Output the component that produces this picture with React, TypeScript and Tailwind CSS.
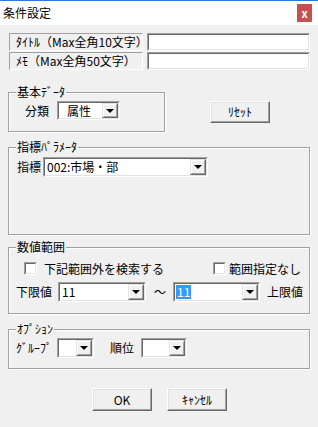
import React from "react";

const FONT = { fontFamily: '"Noto Sans CJK JP", "Noto Sans", sans-serif' };

function Sunken({ className = "", children }: { className?: string; children?: React.ReactNode }) {
  return (
    <div className={"border border-t-[#a0a0a0] border-l-[#a0a0a0] border-b-white border-r-white " + className}>
      <div className="w-full h-full border border-t-[#696969] border-l-[#696969] border-b-[#e3e3e3] border-r-[#e3e3e3] bg-white flex items-center">
        {children}
      </div>
    </div>
  );
}

function DropBtn() {
  return (
    <div className="w-[16px] h-full border border-t-[#e3e3e3] border-l-[#e3e3e3] border-b-[#696969] border-r-[#696969]">
      <div className="w-full h-full bg-[#f0f0f0] border border-t-white border-l-white border-b-[#a0a0a0] border-r-[#a0a0a0] flex items-center justify-center">
        <div className="w-0 h-0 border-l-[4px] border-r-[4px] border-t-[4px] border-l-transparent border-r-transparent border-t-black" />
      </div>
    </div>
  );
}

function Combo({ className = "", text, textClass = "pl-[2px]", selected = false }: { className?: string; text?: string; textClass?: string; selected?: boolean }) {
  return (
    <Sunken className={className}>
      <div className={"flex-1 h-full flex items-center text-[12px] leading-[14px] whitespace-nowrap overflow-hidden " + textClass}>
        {selected ? <span className="bg-[#3399ff] text-white px-[1px]">{text}</span> : text}
      </div>
      <DropBtn />
    </Sunken>
  );
}

function Group({ title, className = "", children }: { title: string; className?: string; children?: React.ReactNode }) {
  return (
    <div className={"relative border border-[#a0a0a0] shadow-[inset_1px_1px_0_#ffffff,1px_1px_0_#ffffff] " + className}>
      <span className="absolute left-[7px] top-[-8px] px-[1px] bg-[#f0f0f0] text-[12px] leading-[14px] whitespace-nowrap">{title}</span>
      {children}
    </div>
  );
}

function Button({ label, className = "" }: { label: string; className?: string }) {
  return (
    <div className={"border border-t-white border-l-white border-b-[#696969] border-r-[#696969] " + className}>
      <div className="w-full h-full border border-t-[#e3e3e3] border-l-[#e3e3e3] border-b-[#a0a0a0] border-r-[#a0a0a0] bg-[#f0f0f0] flex items-center justify-center text-[12px] leading-[14px]">
        {label}
      </div>
    </div>
  );
}

function Check({ className = "" }: { className?: string }) {
  return (
    <div className={"w-[13px] h-[13px] border border-t-[#a0a0a0] border-l-[#a0a0a0] border-b-white border-r-white " + className}>
      <div className="w-full h-full border border-t-[#696969] border-l-[#696969] border-b-[#e3e3e3] border-r-[#e3e3e3] bg-white" />
    </div>
  );
}

export default function App() {
  return (
    <div className="w-[318px] h-[427px] bg-[#f0f0f0] flex flex-col text-black overflow-hidden" style={FONT}>
      {/* Title bar */}
      <div className="h-[25px] bg-white border-t border-[#2b7bd4] flex items-start justify-between shrink-0">
        <span className="pl-[3px] pt-[5px] text-[12px] leading-[14px]">条件設定</span>
        <div className="mt-[3px] mr-[6px] w-[15px] h-[18px] bg-[#c75050] text-white flex items-center justify-center text-[11px] leading-none font-bold">x</div>
      </div>

      {/* Title / memo rows */}
      <div className="mt-[8px] pl-[9px] flex flex-col gap-[1px]">
        {[
          "ﾀｲﾄﾙ（Max全角10文字）",
          "ﾒﾓ（Max全角50文字）",
        ].map((t) => (
          <div key={t} className="flex gap-[4px] h-[18px]">
            <div className="w-[134px] h-full border border-t-[#a0a0a0] border-l-[#a0a0a0] border-b-white border-r-white flex items-center pl-[6px] text-[12px] leading-[14px] whitespace-nowrap">
              {t}
            </div>
            <Sunken className="w-[163px] h-full" />
          </div>
        ))}
      </div>

      {/* Basic data + reset */}
      <div className="mt-[22px] pl-[8px] flex items-start">
        <Group title="基本ﾃﾞｰﾀ" className="w-[157px] h-[40px]">
          <div className="mt-[8px] flex items-center">
            <span className="ml-[16px] w-[32px] text-[12px] leading-[14px]">分類</span>
            <Combo className="w-[63px] h-[19px]" text="属性" textClass="pl-[8px]" />
          </div>
        </Group>
        <Button label="ﾘｾｯﾄ" className="ml-[45px] mt-[9px] w-[60px] h-[22px]" />
      </div>

      {/* Indicator parameter */}
      <div className="mt-[15px] pl-[8px]">
        <Group title="指標ﾊﾟﾗﾒｰﾀ" className="w-[302px] h-[88px]">
          <div className="mt-[9px] flex items-center">
            <span className="ml-[8px] w-[26px] text-[12px] leading-[14px]">指標</span>
            <Combo className="w-[165px] h-[20px]" text="002:市場・部" textClass="pl-[2px]" />
          </div>
        </Group>
      </div>

      {/* Numeric range */}
      <div className="mt-[12px] pl-[8px]">
        <Group title="数値範囲" className="w-[302px] h-[67px]">
          <div className="mt-[14px] flex items-center h-[13px]">
            <Check className="ml-[15px]" />
            <span className="ml-[7px] w-[120px] text-[12px] leading-[14px] whitespace-nowrap">下記範囲外を検索する</span>
            <Check className="ml-[49px]" />
            <span className="ml-[3px] text-[12px] leading-[14px] whitespace-nowrap">範囲指定なし</span>
          </div>
          <div className="mt-[7px] flex items-center">
            <span className="ml-[7px] w-[42px] text-[12px] leading-[14px]">下限値</span>
            <Combo className="w-[88px] h-[20px]" text="11" textClass="pl-[2px]" />
            <span className="ml-[8px] w-[19px] text-[12px] leading-[14px]">～</span>
            <Combo className="w-[87px] h-[20px]" text="11" textClass="pl-[1px]" selected />
            <span className="ml-[7px] text-[12px] leading-[14px]">上限値</span>
          </div>
        </Group>
      </div>

      {/* Option */}
      <div className="mt-[15px] pl-[8px]">
        <Group title="ｵﾌﾟｼｮﾝ" className="w-[302px] h-[40px]">
          <div className="mt-[8px] flex items-center">
            <span className="ml-[7px] w-[41px] text-[12px] leading-[14px]">ｸﾞﾙｰﾌﾟ</span>
            <Combo className="w-[37px] h-[20px]" />
            <span className="ml-[16px] w-[31px] text-[12px] leading-[14px]">順位</span>
            <Combo className="w-[46px] h-[20px]" />
          </div>
        </Group>
      </div>

      {/* Buttons */}
      <div className="mt-[19px] pl-[92px] flex gap-[15px]">
        <Button label="OK" className="w-[60px] h-[23px]" />
        <Button label="ｷｬﾝｾﾙ" className="w-[60px] h-[23px]" />
      </div>
    </div>
  );
}
